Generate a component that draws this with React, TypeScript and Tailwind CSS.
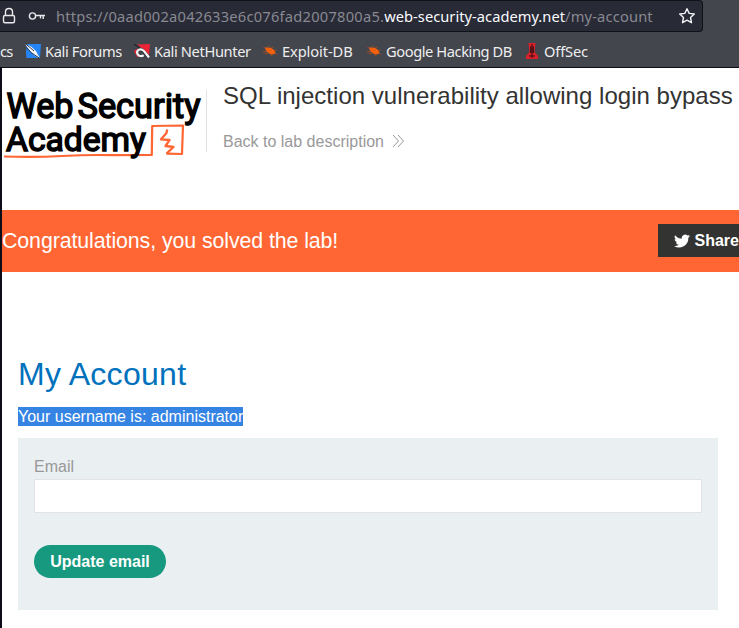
import React from 'react';

function Bookmark({ icon, label, className }: { icon: React.ReactNode; label: string; className: string }) {
  return (
    <div className={`flex shrink-0 items-center ${className}`}>
      {icon}
      <span>{label}</span>
    </div>
  );
}

const Bug = () => (
  <svg width="16" height="16" viewBox="0 0 16 16" className="mr-1 shrink-0">
    <path d="M3 4.6L6 4.4 9.5 5 12 7 13.5 9.8 12 11.2 8.5 11.2 5.5 9.5 3.6 7z" fill="#f2600c" />
    <path d="M3.5 5.2L1.5 4.5M6 4.5L7 2.6M9 5L11.5 3.8M12 7.5L14.6 7M13 10L15 11.5M4.5 8.5L1 8.7M6 9.8L2.8 11M9 11L10 13" stroke="#b34f1f" strokeWidth=".8" fill="none" />
  </svg>
);

const Logo = () => (
  <svg width="204" height="76" viewBox="0 0 204 76" className="shrink-0 overflow-visible">
    <g fill="#000" stroke="#000" strokeWidth="1.5" fontFamily="Roboto, sans-serif" fontWeight="400">
      <text x="4.5" y="33.8" fontSize="35.5" textLength="67" lengthAdjust="spacingAndGlyphs">Web</text>
      <text x="75.5" y="33.8" fontSize="35.5" textLength="123" lengthAdjust="spacingAndGlyphs">Security</text>
    </g>
    <g fill="none" stroke="#ff6633" strokeLinejoin="round">
      <path d="M2 72.5Q32 73.5 60 72T111 71.2L149.8 71 150.2 42 181 41.5 180 70 164.5 69.6" strokeWidth="2.2" />
      <path d="M165.2 45.5L164.5 49 159 55.3 167.5 56 163.5 62 171.5 63 164.5 69.6" strokeWidth="2.3" />
    </g>
    <text x="4" y="66.7" fontSize="34" textLength="140" lengthAdjust="spacingAndGlyphs" fill="#000" stroke="#000" strokeWidth="1.5" fontFamily="Roboto, sans-serif" fontWeight="400">Academy</text>
  </svg>
);

export default function App() {
  return (
    <div className="h-[628px] w-[739px] overflow-hidden bg-white font-['Liberation_Sans',Arial,sans-serif]">
      <header className="h-[68px] border-b border-[#0d0d12] bg-[#44464d] font-['Noto_Sans',sans-serif]">
        <div className="flex h-8 w-[703px] items-center rounded-r-[4px] border-y border-r border-[#111217] bg-[#282a36]">
          <svg width="18" height="20" viewBox="0 0 18 20" className="shrink-0" fill="none" stroke="#e9e9eb" strokeWidth="1.4">
            <rect x="3.5" y="9.5" width="11" height="7.2" rx="1.5" />
            <path d="M5.5 9.5V5.8C5.5 1.3 12.5 1.3 12.5 5.8V9.5" />
          </svg>
          <svg width="18" height="16" viewBox="0 0 18 16" className="ml-[10px] shrink-0" fill="none" stroke="#e9e9eb" strokeWidth="1.4">
            <circle cx="4.5" cy="8" r="3.1" />
            <path d="M7.6 7.5H17M12.5 7.5V10.5M15.2 7.5V11" />
          </svg>
          <div className="ml-[10px] w-[600px] whitespace-nowrap text-[14.67px] leading-5 text-[#888991]">
            <span className="tracking-[0.24px]">https://0aad002a042633e6c076fad2007800a5.</span>
            <span className="tracking-[0.03px] text-[#fbfbfe]">web-security-academy.net</span>
            <span className="tracking-[0.17px]">/my-account</span>
          </div>
          <svg width="18" height="18" viewBox="0 0 18 18" className="ml-[22px] shrink-0" fill="none" stroke="#f3f3f5" strokeWidth="1.4" strokeLinejoin="round">
            <path d="M9 1.7L11.2 6.4 16.3 7 12.5 10.5 13.5 15.7 9 13.2 4.5 15.7 5.5 10.5 1.7 7 6.8 6.4z" />
          </svg>
        </div>
        <nav className="flex h-[35px] items-center whitespace-nowrap pt-[3px] text-[14.67px] leading-5 text-[#eeeeef]">
          <span className="flex w-[25px] shrink-0 tracking-[-0.9px]">cs</span>
          <Bookmark
            label="Kali Forums"
            className="w-[109px] tracking-[-0.37px]"
            icon={
              <svg width="16" height="16" viewBox="0 0 16 16" className="mr-1 shrink-0">
                <path d="M2 1H16L15 15H1.5L1 9z" fill="#2585f5" />
                <path d="M0 1L6 3.5 11 8 12.5 11 15 15.5 9.5 12.5 5.5 8.5z" fill="#f4f5f7" />
                <path d="M0 .5L5 4.5 9 8M1.5 4.5L6 9.5 15 15.5" stroke="#252a32" strokeWidth=".9" fill="none" />
              </svg>
            }
          />
          <Bookmark
            label="Kali NetHunter"
            className="w-[128px] tracking-[-0.37px]"
            icon={
              <svg width="16" height="16" viewBox="0 0 16 16" className="mr-1 shrink-0">
                <path d="M3 1.5L16 1 15 12 10 7z" fill="#ee2436" />
                <path d="M0 8L4 5 4 9 7 14 3 14z" fill="#ee2436" />
                <path d="M0 1L6 5" stroke="#282a30" strokeWidth="1.5" />
                <path d="M14.5 14.5L10 8.5C6 4.5 2.5 7.5 4 11C5 13.5 8.5 14 9.5 12" fill="none" stroke="#282a30" strokeWidth="3.2" />
                <path d="M15 14.5L10 8C6 4.5 2 7.5 3.5 11C5 13.8 8.5 13.5 9.5 12" fill="none" stroke="#f5f5f6" strokeWidth="2.3" />
              </svg>
            }
          />
          <Bookmark label="Exploit-DB" className="w-[104px] tracking-[-0.1px]" icon={<Bug />} />
          <Bookmark label="Google Hacking DB" className="w-[158px] tracking-[-0.42px]" icon={<Bug />} />
          <Bookmark
            label="OffSec"
            className="w-[70px] tracking-[-0.15px]"
            icon={
              <svg width="16" height="16" viewBox="0 0 16 16" className="mr-1 shrink-0">
                <path d="M4.5 0H11.5L10.5 9 14 13V16H2V13L5.5 9z" fill="#dc2027" />
                <path d="M8 1V15M6.7 3.5V10M9.3 3.5V10M5 13H11" stroke="#3c1014" strokeWidth="1.1" fill="none" />
              </svg>
            }
          />
        </nav>
      </header>

      <main className="h-[560px] border-l-2 border-[#0c0d18]">
        <section className="flex h-[142px] pt-[16px]">
          <Logo />
          <div className="mt-[6px] h-[62px] w-px shrink-0 bg-[#e3e3e3]" />
          <div className="ml-4 whitespace-nowrap">
            <h2 className="text-[24px] leading-6 tracking-[0.02px] text-[#333332]">SQL injection vulnerability allowing login bypass</h2>
            <a className="mt-[25px] flex items-center text-[16px] leading-[18px] text-[#999]">
              Back to lab description
              <svg width="13" height="14" viewBox="0 0 13 14" className="mb-[2px] ml-2" fill="none" stroke="#999" strokeWidth="1">
                <path d="M1 1L6.5 7 1 13M6 1L11.5 7 6 13" />
              </svg>
            </a>
          </div>
        </section>

        <section className="flex h-[62px] items-start justify-between bg-[#ff6633] pt-[14px] text-white">
          <p className="whitespace-nowrap pt-px text-[21.33px] leading-8 tracking-[-0.08px]">Congratulations, you solved the lab!</p>
          <div className="flex h-[33px] w-[81px] items-center overflow-hidden bg-[#333332] pl-4 text-[16px] font-bold">
            <svg width="16" height="16" viewBox="0 0 24 24" className="mr-[4.5px] shrink-0" fill="white">
              <path d="M24 4.6a10 10 0 0 1-2.8.8 5 5 0 0 0 2.1-2.7 10 10 0 0 1-3.1 1.2 4.9 4.9 0 0 0-8.4 4.5A14 14 0 0 1 1.7 3.2 4.9 4.9 0 0 0 3.2 9.7a5 5 0 0 1-2.2-.6v.1a4.9 4.9 0 0 0 3.9 4.8 5 5 0 0 1-2.2.1 4.9 4.9 0 0 0 4.6 3.4A9.9 9.9 0 0 1 0 19.5a14 14 0 0 0 21.5-12.4A10 10 0 0 0 24 4.6z" />
            </svg>
            Share
          </div>
        </section>

        <section className="pl-4 pr-[21px] pt-[82px]">
          <h1 className="text-[32px] leading-10 tracking-[0.3px] text-[#0071bc]">My Account</h1>
          <p className="mt-[13px] w-[225px] whitespace-nowrap bg-[#3584e4] text-[16px] leading-[19px] text-white">Your username is: administrator</p>
          <form className="mt-3 h-[172px] bg-[#eaeff2] px-4 pt-[19px]">
            <label className="block text-[16px] leading-[19px] text-[#999]">Email</label>
            <input className="mt-[3px] block h-[34px] w-full border border-[#e3e3e3] bg-white outline-none" />
            <button type="button" className="mt-8 h-[33px] w-[132px] rounded-full bg-[#16997e] text-[16px] font-bold text-white">Update email</button>
          </form>
        </section>
      </main>
    </div>
  );
}
